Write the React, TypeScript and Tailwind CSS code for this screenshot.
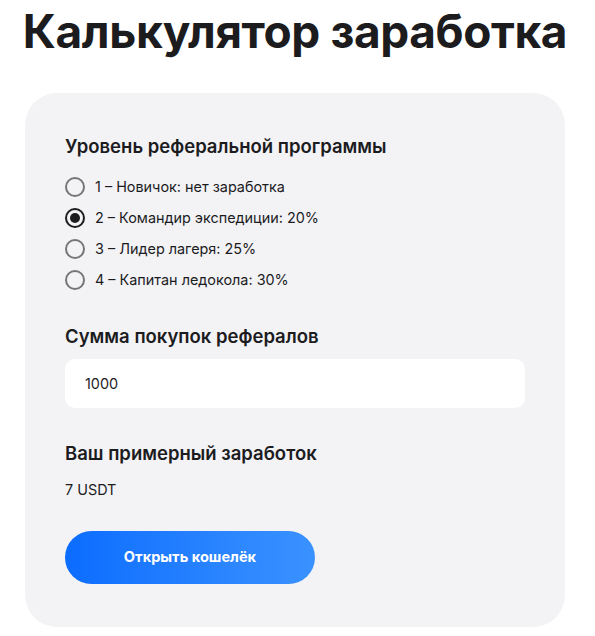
import { useState } from "react";

const levels = [
  { id: 1, label: "1 – Новичок: нет заработка", rate: 0 },
  { id: 2, label: "2 – Командир экспедиции: 20%", rate: 0.2 },
  { id: 3, label: "3 – Лидер лагеря: 25%", rate: 0.25 },
  { id: 4, label: "4 – Капитан ледокола: 30%", rate: 0.3 },
];

export default function App() {
  const [level, setLevel] = useState(2);
  const [amount, setAmount] = useState("1000");

  return (
    <div className="min-h-screen bg-white font-['Inter',sans-serif] text-[#1c1c1e]">
      <div className="ml-[25px] w-[540px] pt-[2px]">
        <div className="flex justify-center">
          <h1 className="whitespace-nowrap text-[46px] font-bold leading-[58px] tracking-[-0.4px]">Калькулятор заработка</h1>
        </div>
        <div className="mt-[33px] rounded-[32px] bg-[#f3f3f6] px-10 pb-[43px] pt-[42px]">
          <h2 className="text-[18.5px] font-semibold leading-[22px]">Уровень реферальной программы</h2>
          <div className="mt-[19px] flex flex-col gap-[9px]">
            {levels.map((l) => (
              <label key={l.id} className="flex h-[22px] cursor-pointer items-center gap-[10px] text-[14.4px]">
                <input
                  type="radio"
                  name="level"
                  className="hidden"
                  checked={level === l.id}
                  onChange={() => setLevel(l.id)}
                />
                <span
                  className={
                    level === l.id
                      ? "flex h-[20px] w-[20px] items-center justify-center rounded-full border-2 border-[#1c1c1e]"
                      : "flex h-[20px] w-[20px] items-center justify-center rounded-full border-2 border-[#767676]"
                  }
                >
                  {level === l.id && <span className="h-[10px] w-[10px] rounded-full bg-[#1c1c1e]" />}
                </span>
                <span>{l.label}</span>
              </label>
            ))}
          </div>

          <h2 className="mt-[34px] text-[18.5px] font-semibold leading-[22px]">Сумма покупок рефералов</h2>
          <input
            className="mt-[12px] h-[49px] w-[460px] rounded-[10px] bg-white px-5 text-[14.4px] outline-none"
            value={amount}
            onChange={(e) => setAmount(e.target.value)}
          />

          <h2 className="mt-[34px] text-[18.5px] font-semibold leading-[22px]">Ваш примерный заработок</h2>
          <p className="mt-[17px] text-[14.4px] leading-[18px]">7 USDT</p>

          <button className="mt-[32px] h-[53px] w-[250px] rounded-full bg-gradient-to-r from-[#0a6cff] to-[#3a92ff] text-[14.6px] font-bold text-white">
            Открыть кошелёк
          </button>
        </div>
      </div>
    </div>
  );
}
